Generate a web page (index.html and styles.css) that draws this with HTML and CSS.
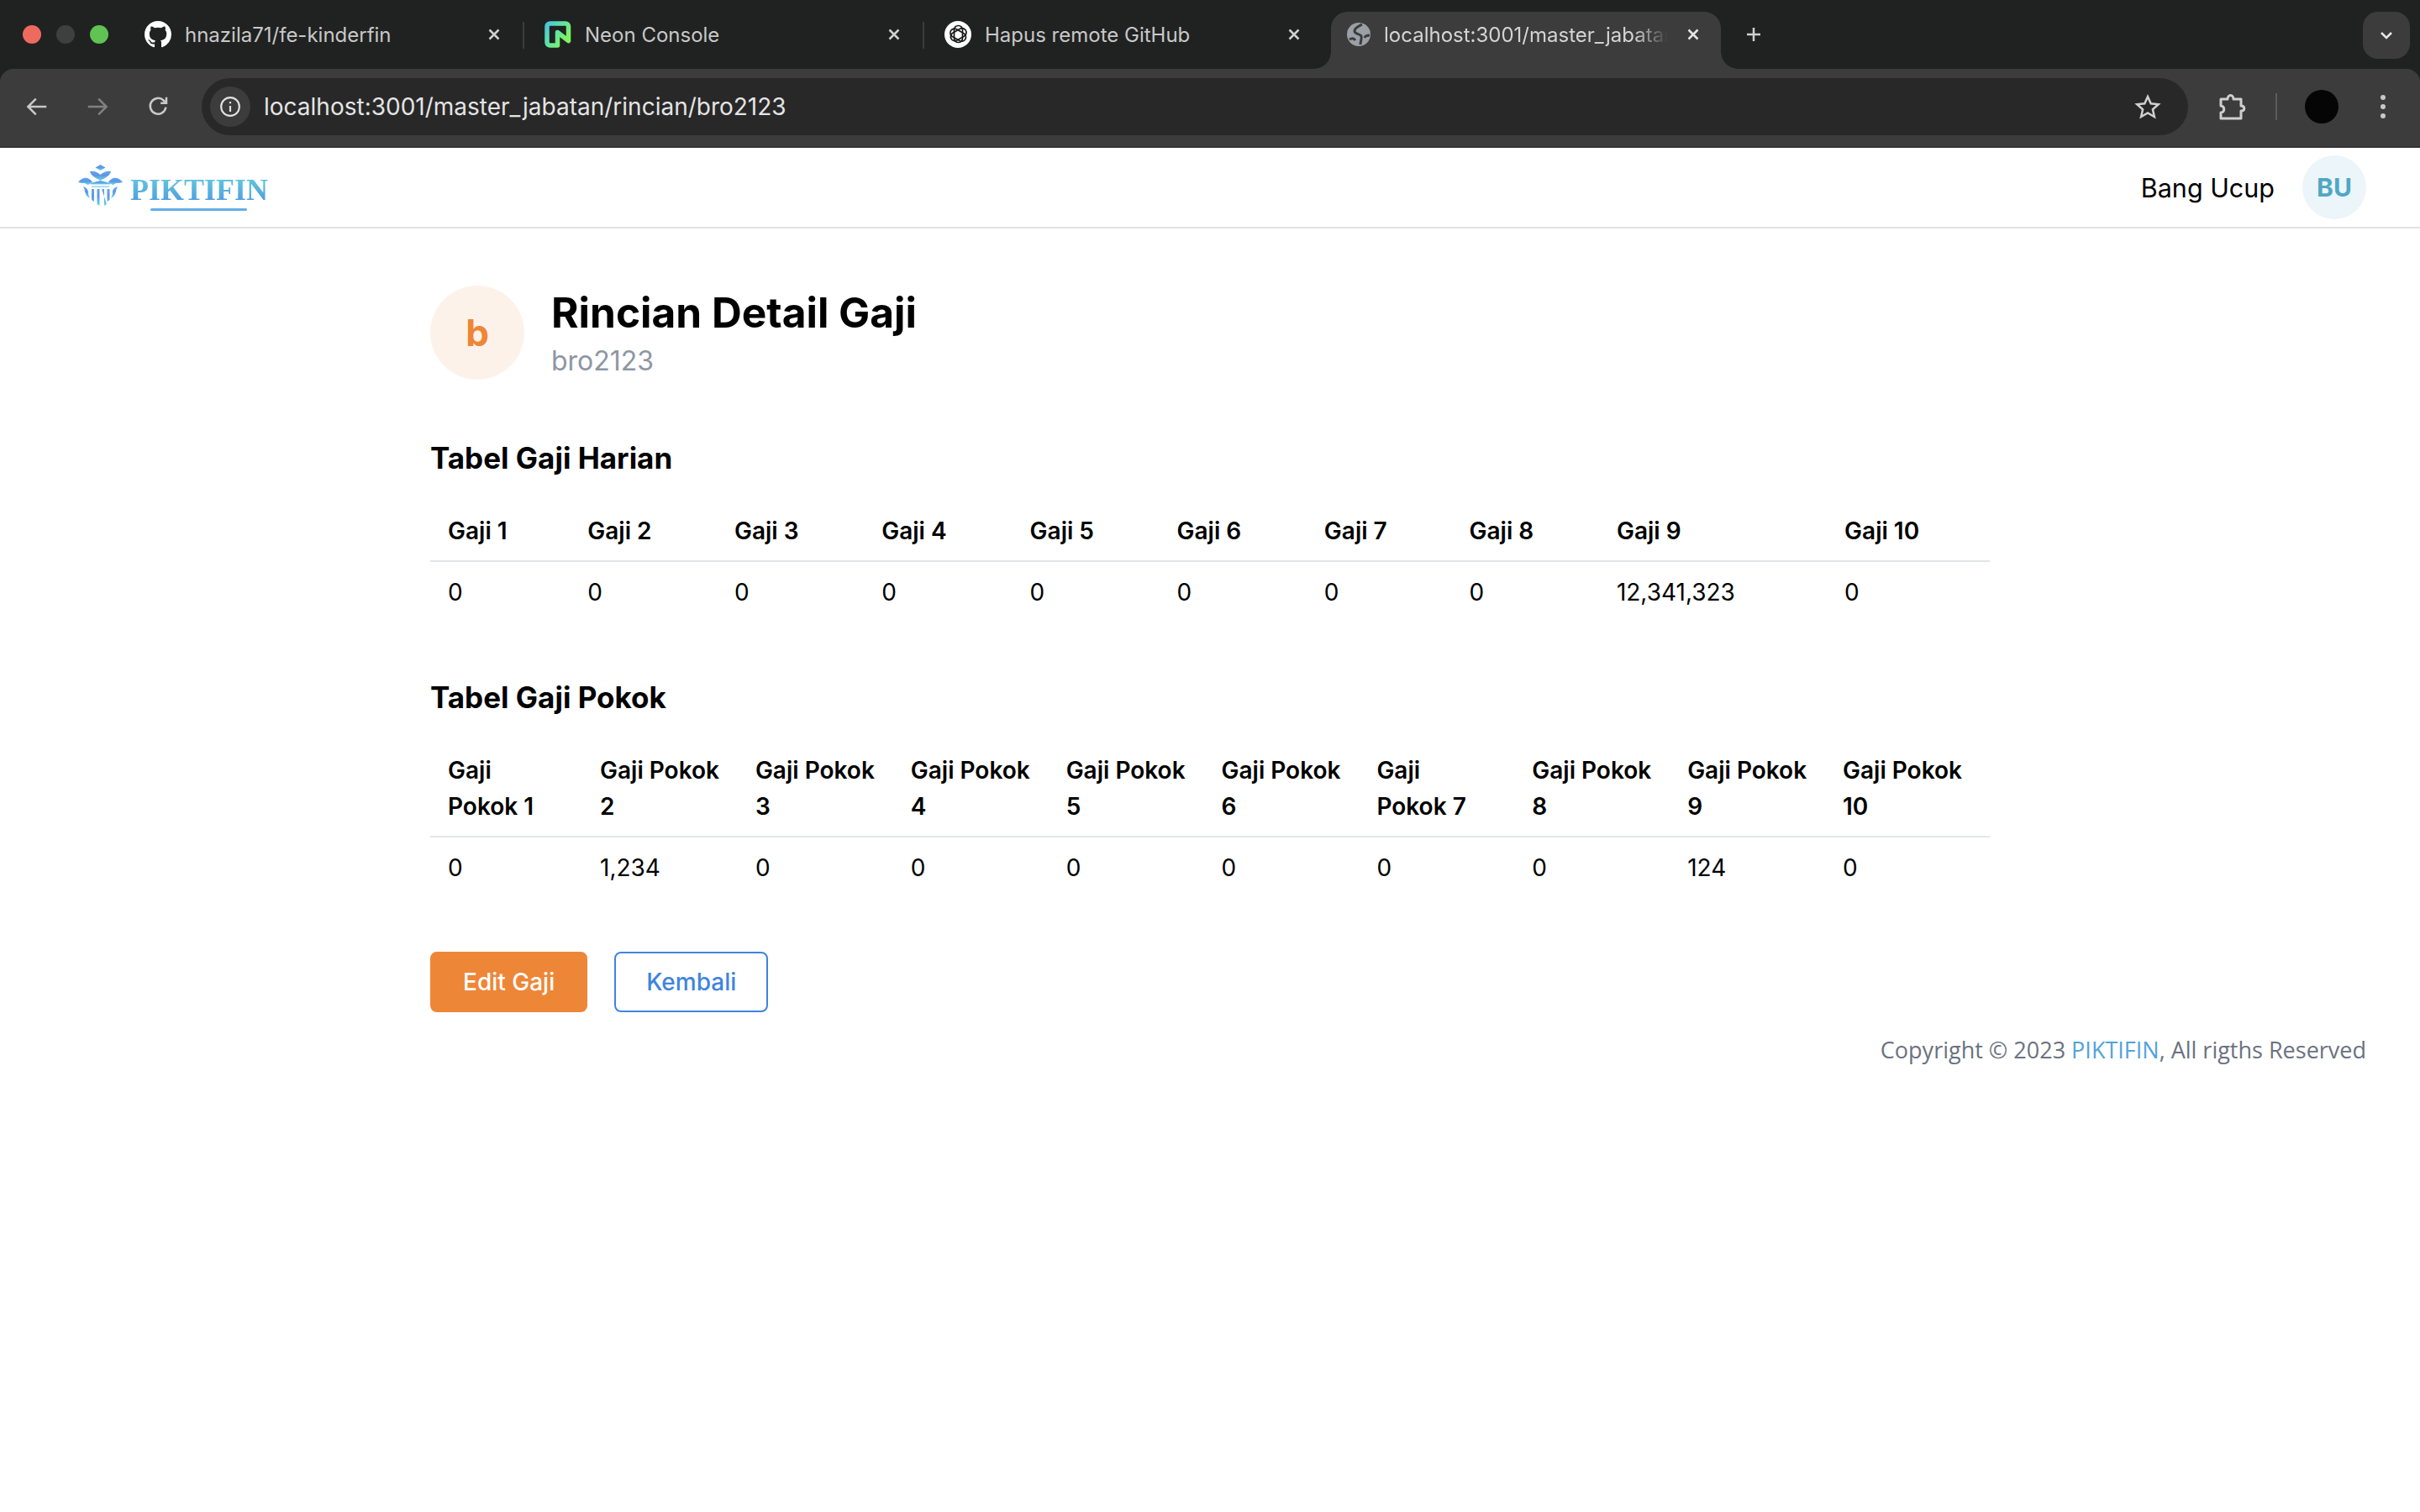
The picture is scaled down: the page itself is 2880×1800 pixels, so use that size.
FILE: index.html
```html
<!DOCTYPE html>
<html lang="en">
  <head>
    <meta charset="UTF-8" />
    <title>Rincian Detail Gaji</title>
    <link rel="stylesheet" href="styles.css">
  </head>
  <body>
    <!-- browser chrome -->
    <div class="chrome">
      <div class="tabstrip">
        <div class="lights">
          <span class="light red"></span>
          <span class="light grey"></span>
          <span class="light green"></span>
        </div>
        <div class="tab">
          <svg class="favicon" viewBox="0 0 16 16"><path fill="#fff" d="M8 0C3.58 0 0 3.58 0 8c0 3.54 2.29 6.53 5.47 7.59.4.07.55-.17.55-.38 0-.19-.01-.82-.01-1.49-2.01.37-2.53-.49-2.69-.94-.09-.23-.48-.94-.82-1.13-.28-.15-.68-.52-.01-.53.63-.01 1.08.58 1.23.82.72 1.21 1.87.87 2.33.66.07-.52.28-.87.51-1.07-1.78-.2-3.64-.89-3.64-3.95 0-.87.31-1.59.82-2.15-.08-.2-.36-1.02.08-2.12 0 0 .67-.21 2.2.82.64-.18 1.32-.27 2-.27s1.36.09 2 .27c1.53-1.04 2.2-.82 2.2-.82.44 1.1.16 1.92.08 2.12.51.56.82 1.27.82 2.15 0 3.07-1.87 3.75-3.65 3.95.29.25.54.73.54 1.48 0 1.07-.01 1.93-.01 2.2 0 .21.15.46.55.38A8.01 8.01 0 0 0 16 8c0-4.42-3.58-8-8-8z"/></svg>
          <span class="tab-title">hnazila71/fe-kinderfin</span>
          <svg class="tab-close" viewBox="0 0 16 16"><path d="M2.500 2.500l11 11M13.500 2.500l-11 11"/></svg>
        </div>
        <div class="tab">
          <svg class="favicon" viewBox="0 0 32 32">
            <defs>
              <linearGradient id="neon" x1="0" y1="0" x2="1" y2="0.700">
                <stop offset="0" stop-color="#4cc4dc"/>
                <stop offset="0.500" stop-color="#5fe6a0"/>
                <stop offset="1" stop-color="#84f25c"/>
              </linearGradient>
            </defs>
            <path fill="none" stroke="url(#neon)" stroke-width="5.500" stroke-linejoin="round" stroke-linecap="round" d="M28.500 22V6.500a3.500 3.500 0 0 0-3.500-3.500H6.500A3.500 3.500 0 0 0 3 6.500v19A3.500 3.500 0 0 0 6.500 29H15.500V13.500l13 10"/>
          </svg>
          <span class="tab-title">Neon Console</span>
          <svg class="tab-close" viewBox="0 0 16 16"><path d="M2.500 2.500l11 11M13.500 2.500l-11 11"/></svg>
        </div>
        <div class="tab">
          <svg class="favicon" viewBox="0 0 32 32">
            <circle cx="16" cy="16" r="16" fill="#fff"/>
            <g fill="none" stroke="#1a1a1a" stroke-width="1.700">
              <rect x="11.500" y="5.500" width="10" height="20" rx="5"/>
              <rect x="11.500" y="5.500" width="10" height="20" rx="5" transform="rotate(60 16 16)"/>
              <rect x="11.500" y="5.500" width="10" height="20" rx="5" transform="rotate(120 16 16)"/>
            </g>
          </svg>
          <span class="tab-title">Hapus remote GitHub</span>
          <svg class="tab-close" viewBox="0 0 16 16"><path d="M2.500 2.500l11 11M13.500 2.500l-11 11"/></svg>
        </div>
        <div class="tab active">
          <svg class="favicon globe" viewBox="0 0 28 28">
            <circle cx="14" cy="14" r="14" fill="#9aa0a6"/>
            <path fill="none" stroke="#3c3c3c" stroke-width="3" d="M18 2c-4 2-9 4-9 8s7 3 8 6-1 6-1 10M27 15c-2 0-5 0-6 3M3 20c3-2 5-2 7 1"/>
          </svg>
          <span class="tab-title fade">localhost:3001/master_jabatan/rincian/bro2123</span>
          <svg class="tab-close bright" viewBox="0 0 16 16"><path d="M2.500 2.500l11 11M13.500 2.500l-11 11"/></svg>
        </div>
        <svg class="new-tab" viewBox="0 0 20 20"><path d="M10 2v16M2 10h16"/></svg>
        <div class="tab-search">
          <svg viewBox="0 0 16 10"><path d="M2 2l6 6 6-6"/></svg>
        </div>
      </div>

      <div class="toolbar">
        <svg class="nav-icon" viewBox="0 0 24 24"><path d="M21 12H4M11 4.500L3.500 12l7.500 7.500"/></svg>
        <svg class="nav-icon dim" viewBox="0 0 24 24"><path d="M3 12h17M13 4.500l7.500 7.500-7.500 7.500"/></svg>
        <svg class="nav-icon" viewBox="0 0 24 24"><path d="M19.500 12.500a7.500 7.500 0 1 1-2.200-6.500L20 8.500M20 3v5.500h-5.500"/></svg>
        <div class="omnibox">
          <div class="site-info">
            <svg viewBox="0 0 24 24"><circle cx="12" cy="12" r="10"/><path d="M12 11v6.500M12 6.500v2"/></svg>
          </div>
          <span class="url">localhost:3001/master_jabatan/rincian/bro2123</span>
          <svg class="star" viewBox="0 0 32 32"><path d="M16 4l3.700 8.300 9 .9-6.800 6 2 8.800-7.900-4.600L8.100 28l2-8.800-6.800-6 9-.9z"/></svg>
        </div>
        <svg class="puzzle" viewBox="0 0 34 34"><path d="M4 8h8c0-6 7-6 7 0h9v8c5 0 5 6 0 6v9H4v-7c5 0 5-8 0-8z"/></svg>
        <span class="toolbar-sep"></span>
        <span class="profile"></span>
        <div class="kebab"><span></span><span></span><span></span></div>
      </div>
    </div>

    <!-- app -->
    <header class="navbar">
      <div class="logo">
        <svg class="emblem" viewBox="0 0 54 52">
          <defs>
            <linearGradient id="emb" x1="0" y1="0" x2="0" y2="1">
              <stop offset="0" stop-color="#5fa8e8"/>
              <stop offset="0.450" stop-color="#5f94ea"/>
              <stop offset="1" stop-color="#5fdce4"/>
            </linearGradient>
          </defs>
          <g fill="url(#emb)">
            <path d="M26.500 0l6 3.500-6 3.500-6-3.500z"/>
            <path d="M14 8c5-1 9 1 12.500 4C30 9 34 7 39 8c-1 5-7 8-12.500 11C21 16 15 13 14 8z"/>
            <path d="M0 21c3-4 7-6 11-5 3 1 5 3 6 5l-5 3c-2 0-3-2-5-2s-4 0-7-1zM53 21c-3-4-7-6-11-5-3 1-5 3-6 5l5 3c2 0 3-2 5-2s4 0 7-1z"/>
            <path d="M15 22l11.500-3L38 22v1.500H15z"/>
            <path d="M16 25.500h21V27H16z" opacity="0.600"/>
            <path d="M16 29h3v15l-3-2zM22.500 29h3v20l-3-2zM28 29h3v20l3-2zM34.500 29h3v13l-3 2z"/>
            <path d="M6 26c3 1 6 3 6 7 0 3 1 5 2 7-4-2-5-5-6-8 0-2-1-4-2-6zM47 26c-3 1-6 3-6 7 0 3-1 5-2 7 4-2 5-5 6-8 0-2 1-4 2-6z"/>
          </g>
        </svg>
        <div class="wordmark">
          <span class="wordmark-text">PIKTIFIN</span>
          <span class="wordmark-line"></span>
        </div>
      </div>
      <div class="user">
        <span class="user-name">Bang Ucup</span>
        <span class="user-avatar">BU</span>
      </div>
    </header>

    <main class="content">
      <div class="detail-head">
        <div class="detail-avatar">b</div>
        <div>
          <h1>Rincian Detail Gaji</h1>
          <p class="detail-sub">bro2123</p>
        </div>
      </div>

      <h2>Tabel Gaji Harian</h2>
      <table>
        <thead>
          <tr>
            <th>Gaji 1</th><th>Gaji 2</th><th>Gaji 3</th><th>Gaji 4</th><th>Gaji 5</th>
            <th>Gaji 6</th><th>Gaji 7</th><th>Gaji 8</th><th>Gaji 9</th><th>Gaji 10</th>
          </tr>
        </thead>
        <tbody>
          <tr>
            <td>0</td><td>0</td><td>0</td><td>0</td><td>0</td>
            <td>0</td><td>0</td><td>0</td><td>12,341,323</td><td>0</td>
          </tr>
        </tbody>
      </table>

      <h2 class="second">Tabel Gaji Pokok</h2>
      <table class="pokok">
        <thead>
          <tr>
            <th class="col-first">Gaji Pokok 1</th><th>Gaji Pokok 2</th><th>Gaji Pokok 3</th><th>Gaji Pokok 4</th><th>Gaji Pokok 5</th>
            <th>Gaji Pokok 6</th><th>Gaji<br>Pokok 7</th><th>Gaji Pokok 8</th><th>Gaji Pokok 9</th><th class="col-last">Gaji Pokok 10</th>
          </tr>
        </thead>
        <tbody>
          <tr>
            <td>0</td><td>1,234</td><td>0</td><td>0</td><td>0</td>
            <td>0</td><td>0</td><td>0</td><td>124</td><td>0</td>
          </tr>
        </tbody>
      </table>

      <div class="actions">
        <button class="btn btn-edit">Edit Gaji</button>
        <button class="btn btn-back">Kembali</button>
      </div>
    </main>

    <footer class="copyright">
      Copyright © 2023 <span class="brand">PIKTIFIN</span>, All rigths Reserved
    </footer>
  </body>
</html>
```

FILE: styles.css
```css
* {
  box-sizing: border-box;
}

body {
  margin: 0;
  background-color: #ffffff;
  color: #000000;
  font-family: Inter, "Liberation Sans", sans-serif;
}

.chrome {
  background-color: #202221;
}

/* tab strip */
.tabstrip {
  display: flex;
  height: 82px;
  color: #c8c8c8;
  font-size: 24px;
}

.lights {
  display: flex;
  gap: 18px;
  width: 148px;
  padding: 30px 0 0 27px;
}

.light {
  width: 22px;
  height: 22px;
  border-radius: 50%;
}

.red { background-color: #ee6a5f; }
.grey { background-color: #3e403f; }
.green { background-color: #5fc454; }

.tab {
  display: flex;
  align-items: center;
  gap: 16px;
  width: 476px;
  height: 54px;
  margin-top: 14px;
  padding: 0 28px 0 24px;
  position: relative;
}

.tab::after {
  content: "";
  position: absolute;
  right: 0;
  top: 12px;
  width: 2px;
  height: 32px;
  background-color: #3c3c3c;
}

.tab:nth-child(4)::after {
  display: none;
}

.favicon {
  width: 32px;
  height: 32px;
  flex: none;
}

.tab-title {
  flex: 1;
  overflow: hidden;
  white-space: nowrap;
}

.tab-close {
  width: 16px;
  height: 16px;
  flex: none;
  fill: none;
  stroke: #d0d0d0;
  stroke-width: 2.500;
}

.tab.active {
  width: 464px;
  height: 68px;
  margin-left: 8px;
  padding: 0 25px 14px 19px;
  background-color: #3c3c3c;
  border-radius: 20px 20px 0 0;
  color: #d4d4d4;
}

.tab.active::before,
.tab.active::after {
  content: "";
  position: absolute;
  top: auto;
  bottom: 0;
  width: 20px;
  height: 20px;
  background: radial-gradient(circle at 0 0, #202221 19.500px, #3c3c3c 20px);
}

.tab.active::before {
  left: -20px;
}

.tab.active::after {
  right: -20px;
  background: radial-gradient(circle at 100% 0, #202221 19.500px, #3c3c3c 20px);
}

.favicon.globe {
  width: 28px;
  height: 28px;
}

.tab-title.fade {
  margin-right: 6px;
  -webkit-mask-image: linear-gradient(to right, #000 88%, transparent 100%);
  mask-image: linear-gradient(to right, #000 88%, transparent 100%);
}

.tab-close.bright {
  stroke: #e6e6e6;
}

.new-tab {
  width: 20px;
  height: 20px;
  margin: 31px 0 0 29px;
  fill: none;
  stroke: #d0d0d0;
  stroke-width: 2.500;
}

.tab-search {
  display: flex;
  align-items: center;
  justify-content: center;
  width: 56px;
  height: 56px;
  margin: 14px 12px 0 auto;
  background-color: #3c3c3c;
  border-radius: 18px;
}

.tab-search svg {
  width: 16px;
  height: 10px;
  fill: none;
  stroke: #e6e6e6;
  stroke-width: 2.500;
}

/* toolbar */
.toolbar {
  display: flex;
  align-items: center;
  height: 94px;
  padding: 0 0 2px 0;
  background-color: #3c3c3c;
  border-bottom: 2px solid #333333;
  border-radius: 16px 16px 0 0;
}

.nav-icon {
  width: 30px;
  height: 30px;
  margin-left: 29px;
  margin-right: 13px;
  fill: none;
  stroke: #c8c8c8;
  stroke-width: 2;
}

.nav-icon.dim {
  stroke: #808080;
}

.omnibox {
  display: flex;
  align-items: center;
  width: 2364px;
  height: 68px;
  margin-left: 24px;
  padding: 0 32px 0 10px;
  background-color: #282828;
  border-radius: 34px;
}

.site-info {
  display: flex;
  align-items: center;
  justify-content: center;
  width: 48px;
  height: 48px;
  background-color: #3c3c3c;
  border-radius: 50%;
}

.site-info svg {
  width: 26px;
  height: 26px;
  fill: none;
  stroke: #e0e0e0;
  stroke-width: 2;
}

.url {
  flex: 1;
  margin-left: 16px;
  color: #e4e4e4;
  font-size: 28px;
}

.star {
  width: 32px;
  height: 32px;
  fill: none;
  stroke: #d0d0d0;
  stroke-width: 2.500;
}

.puzzle {
  width: 34px;
  height: 34px;
  margin-left: 35px;
  fill: none;
  stroke: #cfcfcf;
  stroke-width: 3;
  stroke-linejoin: round;
}

.toolbar-sep {
  width: 2px;
  height: 32px;
  margin-left: 35px;
  background-color: #5c5c5c;
}

.profile {
  width: 40px;
  height: 40px;
  margin-left: 33px;
  background-color: #050505;
  border-radius: 50%;
}

.kebab {
  display: flex;
  flex-direction: column;
  gap: 5px;
  margin-left: 50px;
}

.kebab span {
  width: 6px;
  height: 6px;
  background-color: #c8c8c8;
  border-radius: 50%;
}

/* navbar */
.navbar {
  display: flex;
  align-items: center;
  justify-content: space-between;
  height: 96px;
  padding: 0 64px 0 93px;
  border-bottom: 2px solid #e0e1e8;
}

.logo {
  display: flex;
  align-items: flex-start;
  gap: 8px;
}

.emblem {
  width: 54px;
  height: 52px;
}

.wordmark {
  display: flex;
  flex-direction: column;
  padding-top: 12px;
}

.wordmark-text {
  font-family: "Liberation Serif", serif;
  font-size: 36px;
  font-weight: 700;
  line-height: 36px;
  background: linear-gradient(to bottom, #66ccdc, #4a98e2);
  -webkit-background-clip: text;
  background-clip: text;
  color: transparent;
}

.wordmark-line {
  width: 115px;
  height: 3px;
  margin: 4px 0 0 24px;
  background-color: #62aee8;
  border-radius: 2px;
}

.user {
  display: flex;
  align-items: center;
  gap: 33px;
}

.user-name {
  font-size: 30.500px;
}

.user-avatar {
  display: flex;
  align-items: center;
  justify-content: center;
  width: 76px;
  height: 76px;
  background-color: #ecf5f9;
  border-radius: 50%;
  color: #4fa8c3;
  font-size: 30px;
  font-weight: 700;
}

/* content */
.content {
  width: 1856px;
  margin: 0 auto;
  padding-top: 68px;
}

.detail-head {
  display: flex;
  align-items: center;
  gap: 32px;
}

.detail-avatar {
  display: flex;
  align-items: center;
  justify-content: center;
  width: 112px;
  height: 112px;
  background-color: #fdf2ea;
  border-radius: 50%;
  color: #ef8636;
  font-size: 44px;
  font-weight: 700;
}

h1 {
  margin: 0;
  font-size: 49.600px;
  font-weight: 700;
  line-height: 64px;
}

.detail-sub {
  margin: 3px 0 0;
  color: #8d96a3;
  font-size: 32px;
  line-height: 45px;
}

h2 {
  margin: 71px 0 29px;
  font-size: 35px;
  font-weight: 700;
  line-height: 44px;
}

h2.second {
  margin-top: 67px;
}

table {
  width: 100%;
  border-collapse: collapse;
  font-size: 28px;
  line-height: 43px;
}

th,
td {
  padding: 15px 20px 14px 21px;
  text-align: left;
}

th {
  padding-bottom: 13px;
  border-bottom: 2px solid #e2e6ea;
  font-weight: 600;
}

td {
  font-weight: 400;
}

.pokok {
  table-layout: fixed;
}

.col-first {
  width: 181px;
}

.col-last {
  width: 196px;
}

.actions {
  display: flex;
  gap: 32px;
  margin-top: 64px;
}

.btn {
  height: 72px;
  border-radius: 8px;
  font-family: inherit;
  font-size: 28px;
  font-weight: 500;
}

.btn-edit {
  padding: 0 37px;
  background-color: #ee8638;
  border: 2px solid #ee8638;
  color: #ffffff;
}

.btn-back {
  padding: 0 36px;
  background-color: #ffffff;
  border: 2px solid #3f84df;
  color: #3f84df;
}

.copyright {
  margin-top: 25px;
  padding-right: 64px;
  color: #6b7280;
  font-family: "Open Sans", sans-serif;
  font-size: 27px;
  line-height: 40px;
  text-align: right;
}

.brand {
  color: #52a3dc;
}
```
